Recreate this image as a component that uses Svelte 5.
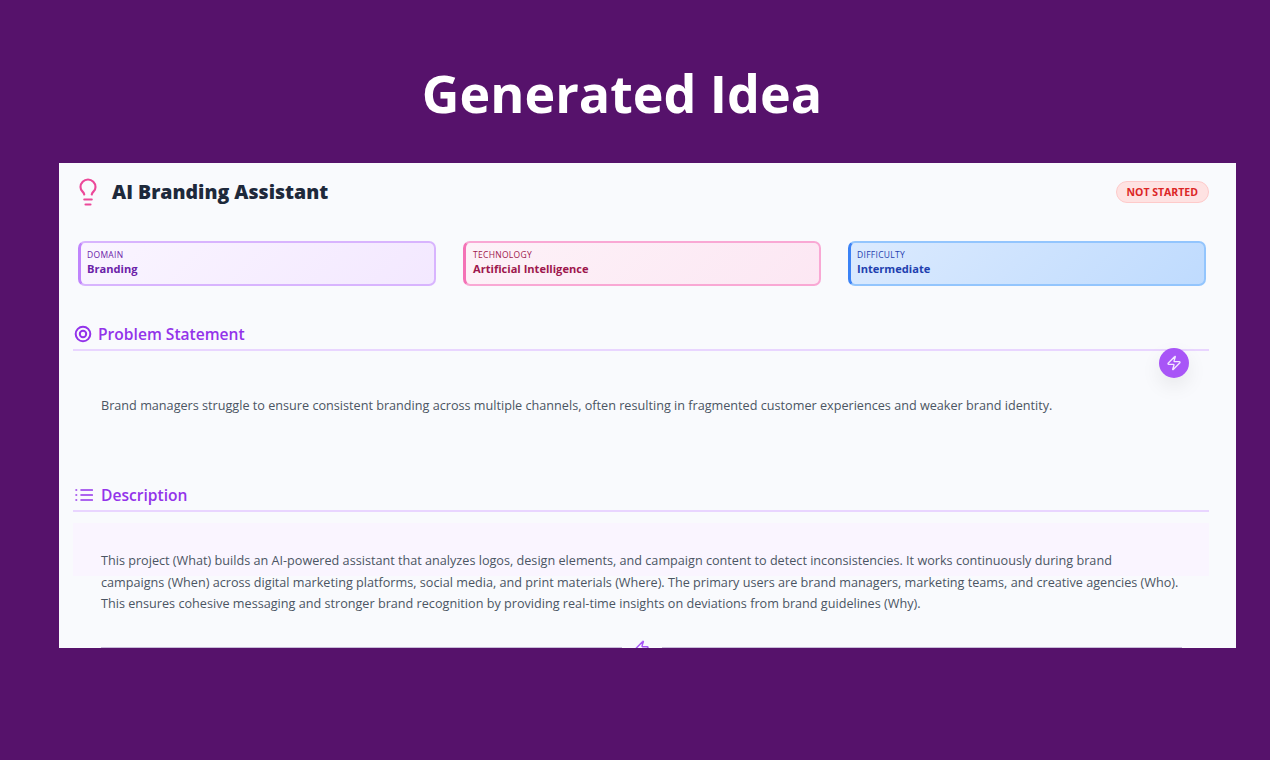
<script>
  const meta = [
    { kind: 'domain', label: 'Domain', value: 'Branding' },
    { kind: 'tech', label: 'Technology', value: 'Artificial Intelligence' },
    { kind: 'level', label: 'Difficulty', value: 'Intermediate' }
  ];

  const zap = 'M4 14a1 1 0 0 1-.78-1.63l9.9-10.2a.5.5 0 0 1 .86.46l-1.92 6.02A1 1 0 0 0 13 10h7a1 1 0 0 1 .78 1.63l-9.9 10.2a.5.5 0 0 1-.86-.46l1.92-6.02A1 1 0 0 0 11 14z';
</script>

<div class="page">
  <h1>Generated Idea</h1>

  <main class="card">
    <header class="top">
      <div class="name">
        <svg width="30" height="30" viewBox="0 0 24 24" fill="none" stroke="#ec4899" stroke-width="1.700" stroke-linecap="round" stroke-linejoin="round">
          <path d="M15 14c.2-1 .7-1.700 1.500-2.500 1-.9 1.500-2.200 1.500-3.500A6 6 0 0 0 6 8c0 1 .2 2.200 1.500 3.500.7.7 1.300 1.500 1.500 2.500" />
          <path d="M9 18h6" />
          <path d="M10 22h4" />
        </svg>
        <h2>AI Branding Assistant</h2>
      </div>
      <span class="status">NOT STARTED</span>
    </header>

    <div class="meta">
      {#each meta as m}
        <div class="box {m.kind}">
          <div class="label">{m.label}</div>
          <div class="value">{m.value}</div>
        </div>
      {/each}
    </div>

    <section class="problem">
      <h3>
        <svg width="18" height="18" viewBox="0 0 18 18" fill="none" stroke="#9333ea" stroke-width="2">
          <circle cx="9" cy="9" r="7.300" />
          <circle cx="9" cy="9" r="3.200" />
        </svg>
        Problem Statement
      </h3>
      <button class="fab" aria-label="Generate">
        <svg width="16" height="16" viewBox="0 0 24 24" fill="none" stroke="#f3e8ff" stroke-width="2" stroke-linecap="round" stroke-linejoin="round">
          <path d={zap} />
        </svg>
      </button>
      <p>Brand managers struggle to ensure consistent branding across multiple channels, often resulting in fragmented customer experiences and weaker brand identity.</p>
    </section>

    <section class="description">
      <h3>
        <svg width="18" height="14" viewBox="0 0 18 14" fill="none" stroke="#9333ea" stroke-width="1.600" stroke-linecap="round">
          <path d="M6 2h11.300M6 7h11.300M6 12h11.300" />
          <path d="M1 2h.6M1 7h.6M1 12h.6" />
        </svg>
        Description
      </h3>
      <p>This project (What) builds an AI-powered assistant that analyzes logos, design elements, and campaign content to detect inconsistencies. It works continuously during brand<br />campaigns (When) across digital marketing platforms, social media, and print materials (Where). The primary users are brand managers, marketing teams, and creative agencies (Who). This ensures cohesive messaging and stronger brand recognition by providing real-time insights on deviations from brand guidelines (Why).</p>
    </section>

    <div class="divider">
      <span class="rule"></span>
      <svg width="16" height="16" viewBox="0 0 24 24" fill="none" stroke="#a855f7" stroke-width="2.200" stroke-linecap="round" stroke-linejoin="round">
        <path d={zap} />
      </svg>
      <span class="rule"></span>
    </div>
  </main>
</div>

<style>
  :global(body) {
    margin: 0;
    background: #56126b;
  }

  .page {
    height: 760px;
    padding: 0 34px 0 59px;
    box-sizing: border-box;
    overflow: hidden;
    font-family: "Open Sans", "Noto Sans", sans-serif;
  }

  h1 {
    margin: 0 51px 0 0;
    height: 163px;
    line-height: 186px;
    text-align: center;
    font-size: 52px;
    font-weight: 700;
    color: #fff;
    box-sizing: border-box;
  }

  .card {
    height: 485px;
    overflow: hidden;
    background: #f9fafd;
    padding: 0 27px 0 14px;
    box-sizing: border-box;
  }

  .top {
    height: 57px;
    display: flex;
    align-items: center;
    justify-content: space-between;
  }

  .name {
    display: flex;
    align-items: center;
    gap: 9px;
  }

  h2 {
    margin: 0;
    font-size: 19.500px;
    font-weight: 800;
    color: #1e293b;
  }

  .status {
    height: 22px;
    line-height: 20px;
    padding: 0 10px;
    border: 1px solid #fecaca;
    border-radius: 12px;
    background: #fee2e2;
    color: #dc2626;
    font-size: 10.500px;
    font-weight: 700;
    box-sizing: border-box;
  }

  .meta {
    display: flex;
    gap: 27px;
    margin: 21px 0 0 5px;
  }

  .box {
    width: 358px;
    height: 45px;
    box-sizing: border-box;
    padding: 6px 8px 0 6px;
    border: 2px solid;
    border-left-width: 3px;
    border-radius: 7px;
  }

  .label {
    font-size: 8.500px;
    line-height: 12px;
    letter-spacing: 0.3px;
    text-transform: uppercase;
  }

  .value {
    font-size: 11.100px;
    line-height: 16px;
    font-weight: 700;
  }

  .domain {
    background: linear-gradient(135deg, #faf5ff, #f3e8ff);
    border-color: #d8b4fe;
    border-left-color: #c084fc;
    color: #6b21a8;
  }

  .tech {
    padding-left: 7px;
    background: linear-gradient(135deg, #fdf2f8, #fce7f3);
    border-color: #f9a8d4;
    border-left-color: #f472b6;
    color: #9d174d;
  }

  .level {
    background: linear-gradient(135deg, #dbeafe, #bfdbfe);
    border-color: #93c5fd;
    border-left-color: #3b82f6;
    color: #1e40af;
  }

  section {
    position: relative;
  }

  h3 {
    display: flex;
    align-items: center;
    gap: 6px;
    margin: 0;
    height: 27px;
    padding: 0 0 2px 1px;
    border-bottom: 2px solid #e9d5ff;
    box-sizing: content-box;
    font-size: 15.600px;
    font-weight: 600;
    color: #9333ea;
  }

  h3 svg {
    flex-shrink: 0;
  }

  .problem {
    margin-top: 34px;
    height: 161px;
  }

  .description h3 {
    gap: 8px;
    padding-left: 2px;
  }

  p {
    margin: 0;
    color: #4b5563;
    font-size: 12.650px;
    line-height: 21.500px;
  }

  .problem p {
    padding: 44px 28px 0;
  }

  .description p {
    margin-top: 11px;
    padding: 27px 27px 0 28px;
    background: linear-gradient(#faf5ff, #faf5ff) no-repeat;
    background-size: 100% 53px;
  }

  .fab {
    position: absolute;
    top: 28px;
    right: 20px;
    width: 30px;
    height: 30px;
    padding: 0;
    border: none;
    border-radius: 50%;
    background: #a855f7;
    display: flex;
    align-items: center;
    justify-content: center;
    box-shadow: 0 8px 20px rgba(0, 0, 0, 0.08);
  }

  .divider {
    display: flex;
    align-items: center;
    gap: 12px;
    margin: 24px 27px 0 28px;
    height: 18px;
  }

  .rule {
    flex: 1;
    height: 2px;
    background: #c9bcd9;
  }
</style>
